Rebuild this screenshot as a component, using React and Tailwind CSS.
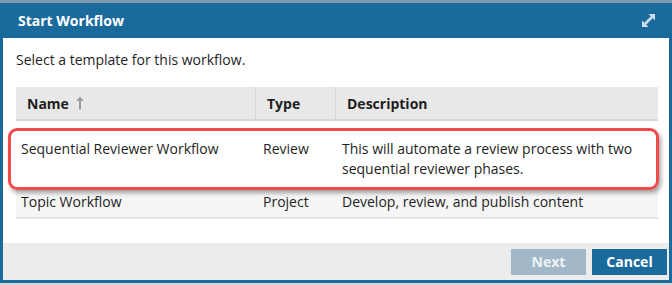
import { useState } from "react";

const rows = [
  {
    name: "Sequential Reviewer Workflow",
    type: "Review",
    desc: "This will automate a review process with two sequential reviewer phases.",
  },
  { name: "Topic Workflow", type: "Project", desc: "Develop, review, and publish content" },
];

function ExpandIcon() {
  return (
    <svg width="15" height="15" viewBox="0 0 15 15" className="text-[#c9deee]">
      <path d="M4 11L11 4" stroke="currentColor" strokeWidth="2.6" />
      <path d="M7.5 1H14v6.5z" fill="currentColor" />
      <path d="M7.5 14H1V7.5z" fill="currentColor" />
    </svg>
  );
}

function SortArrow() {
  return (
    <svg width="8" height="14" viewBox="0 0 8 14" className="ml-[7px] text-[#9a9a9a]">
      <path d="M4 0.5L7.5 5H5v8.5H3V5H0.5z" fill="currentColor" />
    </svg>
  );
}

export default function App() {
  const [selected, setSelected] = useState(0);

  return (
    <div
      className="w-[672px] h-[285px] bg-[#d3d6d9] overflow-hidden text-[#1e1e1e]"
      style={{ fontFamily: '"Open Sans", "Noto Sans", sans-serif' }}
    >
      <div className="h-[3px] bg-[#7b99b0]" />
      <div className="w-[672px] h-[280px] flex flex-col border-x-[3px] border-b-[3px] border-[#1b6a9c]">
        {/* header */}
        <div className="h-[35px] bg-[#1b6a9c] flex items-center justify-between pl-[15px] pr-[16px] -mx-[3px]">
          <span className="text-white font-bold text-[14px] ml-[3px]">Start Workflow</span>
          <ExpandIcon />
        </div>

        {/* body */}
        <div className="flex-1 bg-white pl-[13px] pr-[8px]">
          <p className="text-[14px] h-[49px] pt-[11px] leading-[22px]">Select a template for this workflow.</p>
          <div className="relative w-[642px] text-[14px]">
            <div className="grid grid-cols-[240px_80px_322px] h-[34px] bg-[#e8e8e8] border-b-2 border-[#d6d6d6] font-bold">
              <div className="flex items-center pl-[11px] border-r border-[#d4d4d4]">
                Name <SortArrow />
              </div>
              <div className="flex items-center pl-[11px] border-r border-[#d4d4d4]">Type</div>
              <div className="flex items-center pl-[11px]">Description</div>
            </div>
            {rows.map((r, i) => (
              <div
                key={r.name}
                onClick={() => setSelected(i)}
                className={
                  i === 0
                    ? "grid grid-cols-[240px_80px_322px] h-[66px] bg-white pt-[18px] leading-[20px]"
                    : "grid grid-cols-[240px_80px_322px] h-[32px] bg-[#f5f5f5] border-b-2 border-[#e6e6e6] items-center leading-[20px]"
                }
              >
                <div className="pl-[5px]">{r.name}</div>
                <div className="pl-[7px]">{r.type}</div>
                <div className="pl-[6px] pr-[10px]">{r.desc}</div>
              </div>
            ))}
            {selected === 0 && (
              <div className="absolute left-[-8px] top-[41px] w-[651px] h-[62px] rounded-[9px] border-[3px] border-[#f04a4c] shadow-[2px_3px_4px_rgba(0,0,0,0.35)] pointer-events-none" />
            )}
          </div>
        </div>

        {/* footer */}
        <div className="h-[37px] bg-[#ececec] flex items-center justify-end gap-[6px] pr-[2px]">
          <button className="w-[75px] h-[26px] bg-[#a2b8c8] text-[#eef3f6] font-bold text-[14px]">Next</button>
          <button className="w-[75px] h-[26px] bg-[#1b6a9c] text-white font-bold text-[14px]">Cancel</button>
        </div>
      </div>
    </div>
  );
}
